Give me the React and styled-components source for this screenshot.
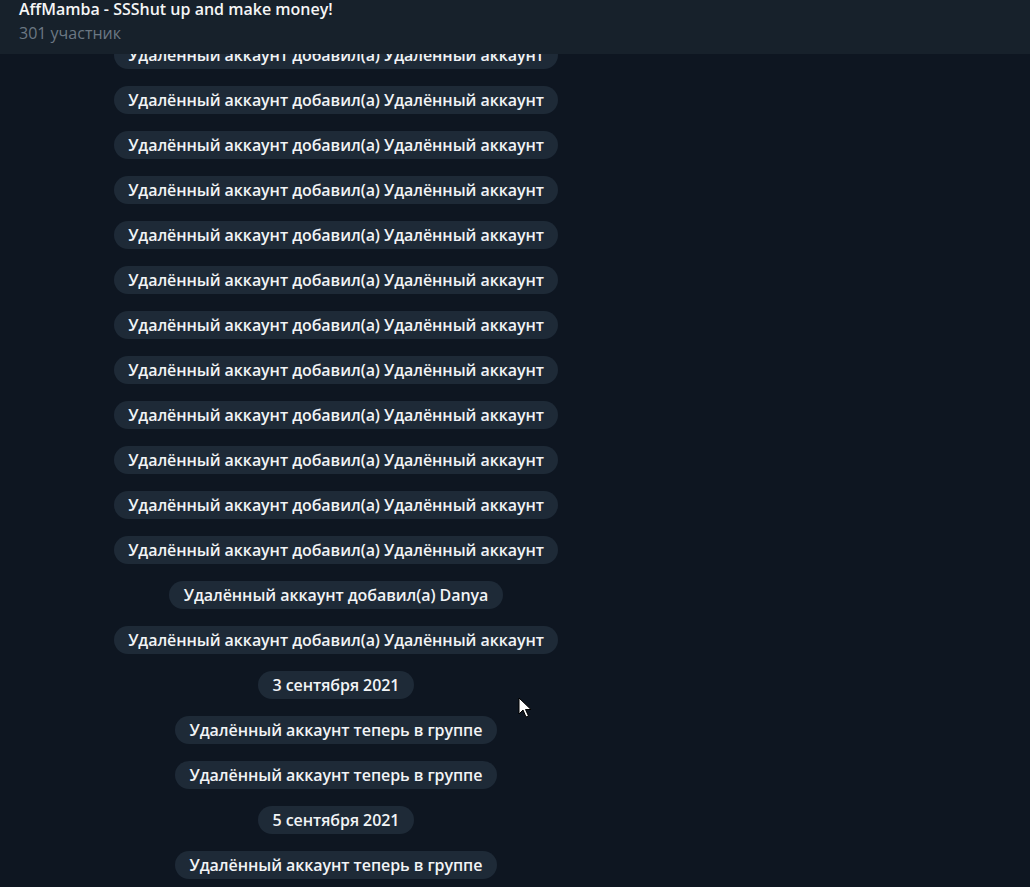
import styled, { createGlobalStyle } from "styled-components";

const GlobalStyle = createGlobalStyle`
	html, body {
		margin: 0;
		padding: 0;
		background: #0e1621;
	}
	body {
		font-family: "Open Sans", "Noto Sans", sans-serif;
		-webkit-font-smoothing: antialiased;
	}
`;

const added = "Удалённый аккаунт добавил(а) Удалённый аккаунт";
const joined = "Удалённый аккаунт теперь в группе";

const messages = [
	{ text: "Удаленный аккаунт добавил(а) Удаленный аккаунт" },
	...Array(11).fill({ text: added }),
	{ text: "Удалённый аккаунт добавил(а) Danya" },
	{ text: added },
	{ text: "3 сентября 2021", date: true },
	{ text: joined },
	{ text: joined },
	{ text: "5 сентября 2021", date: true },
	{ text: joined },
];

export default function App() {
	return (
		<Window>
			<GlobalStyle />
			<Header>
				<Title>AffMamba - SSShut up and make money!</Title>
				<Subtitle>301 участник</Subtitle>
			</Header>
			<Messages>
				{messages.map((m, i) => (
					<ServiceRow key={i}>
						<Pill>{m.text}</Pill>
					</ServiceRow>
				))}
			</Messages>
			<Cursor width="14" height="22" viewBox="0 0 14 22">
				<path
					d="M1 1 L1 17 L5 13 L8 20 L10.5 19 L7.5 12.5 L13 12.5 Z"
					fill="#fff"
					stroke="#000"
					strokeWidth="1"
					strokeLinejoin="miter"
				/>
			</Cursor>
		</Window>
	);
}

const Window = styled.div`
	position: relative;
	width: 1030px;
	height: 887px;
	overflow: hidden;
	background: #0e1621;
`;

const Header = styled.div`
	position: absolute;
	top: 0;
	left: 0;
	right: 0;
	height: 54px;
	box-sizing: border-box;
	padding: 1px 19px 0;
	display: flex;
	flex-direction: column;
	background: #17212b;
	z-index: 2;
`;

const Title = styled.div`
	font-size: 16px;
	font-weight: 600;
	line-height: 17px;
	color: #f5f5f5;
`;

const Subtitle = styled.div`
	margin-top: 5px;
	font-size: 16px;
	line-height: 20px;
	color: #6c7883;
`;

const Messages = styled.div`
	width: 672px;
	padding-top: 41px;
	display: flex;
	flex-direction: column;
	gap: 17px;
`;

const ServiceRow = styled.div`
	display: flex;
	justify-content: center;
`;

const Pill = styled.div`
	height: 28px;
	padding: 0 14.5px;
	border-radius: 14px;
	background: #1e2a37;
	color: #f2f4f6;
	font-size: 16px;
	font-weight: 600;
	letter-spacing: -0.06px;
	line-height: 28px;
	white-space: nowrap;
`;

const Cursor = styled.svg`
	position: absolute;
	left: 518px;
	top: 697px;
	z-index: 3;
`;
